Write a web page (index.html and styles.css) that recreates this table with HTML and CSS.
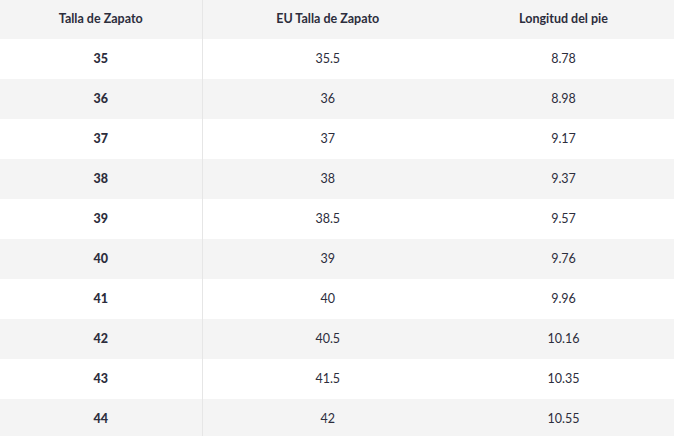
FILE: index.html
```html
<!DOCTYPE html>
<html>
<head>
<meta charset="utf-8">
<link rel="stylesheet" href="styles.css">
</head>
<body>
<table class="size-table">
  <colgroup>
    <col class="c1"><col class="c2"><col class="c3">
  </colgroup>
  <thead>
    <tr><th>Talla de Zapato</th><th>EU Talla de Zapato</th><th>Longitud del pie</th></tr>
  </thead>
  <tbody>
    <tr><td class="size">35</td><td>35.5</td><td>8.78</td></tr>
    <tr><td class="size">36</td><td>36</td><td>8.98</td></tr>
    <tr><td class="size">37</td><td>37</td><td>9.17</td></tr>
    <tr><td class="size">38</td><td>38</td><td>9.37</td></tr>
    <tr><td class="size">39</td><td>38.5</td><td>9.57</td></tr>
    <tr><td class="size">40</td><td>39</td><td>9.76</td></tr>
    <tr><td class="size">41</td><td>40</td><td>9.96</td></tr>
    <tr><td class="size">42</td><td>40.5</td><td>10.16</td></tr>
    <tr><td class="size">43</td><td>41.5</td><td>10.35</td></tr>
    <tr><td class="size">44</td><td>42</td><td>10.55</td></tr>
  </tbody>
</table>
</body>
</html>
```
FILE: styles.css
```css
html, body {
  margin: 0;
  padding: 0;
  background: #fff;
}
body {
  font-family: Lato, "Open Sans", sans-serif;
  color: #2c2d3c;
  font-size: 12.5px;
}
.size-table {
  width: 674px;
  border-collapse: collapse;
  table-layout: fixed;
}
.c1 { width: 202px; }
.c2 { width: 251px; }
.c3 { width: 221px; }
.size-table th,
.size-table td {
  text-align: center;
  padding: 0 0 2px 0;
  height: 38px;
}
.size-table thead th {
  height: 36px;
  padding-bottom: 3px;
  font-weight: 700;
  background: #f4f4f4;
}
.size-table th:first-child,
.size-table td:first-child {
  border-right: 1px solid #e6e6e6;
}
.size-table tbody tr:nth-child(even) td {
  background: #f4f4f4;
}
.size-table td.size {
  font-weight: 900;
}
```
